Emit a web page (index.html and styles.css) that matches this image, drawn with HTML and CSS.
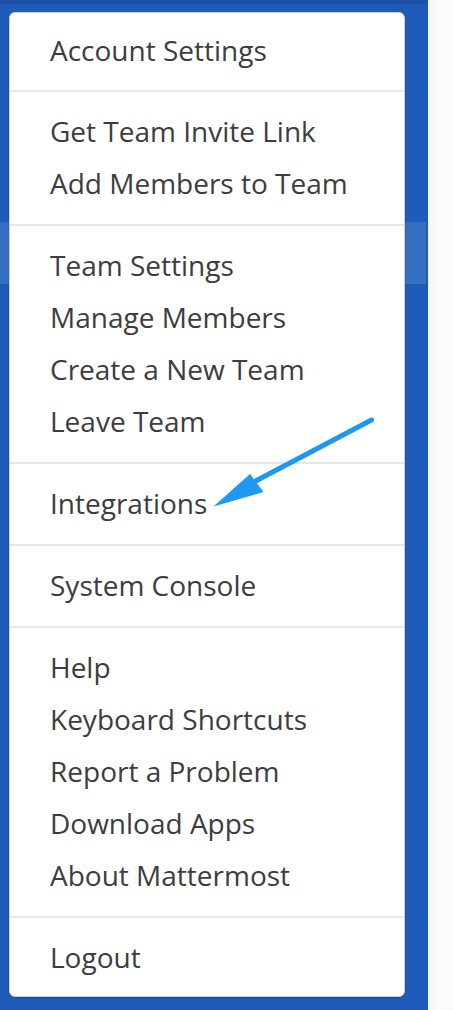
FILE: index.html
```html
<!DOCTYPE html>
<html>
<head>
<meta charset="utf-8">
<link rel="stylesheet" href="styles.css">
</head>
<body>
<div class="app">
  <aside class="sidebar">
    <div class="topbar"></div>
    <div class="spacer"></div>
    <div class="active-row"></div>
    <nav class="menu">
      <ul class="section first">
        <li>Account Settings</li>
      </ul>
      <ul class="section">
        <li>Get Team Invite Link</li>
        <li>Add Members to Team</li>
      </ul>
      <ul class="section">
        <li>Team Settings</li>
        <li>Manage Members</li>
        <li>Create a New Team</li>
        <li>Leave Team</li>
      </ul>
      <ul class="section">
        <li>Integrations</li>
      </ul>
      <ul class="section">
        <li>System Console</li>
      </ul>
      <ul class="section">
        <li>Help</li>
        <li>Keyboard Shortcuts</li>
        <li>Report a Problem</li>
        <li>Download Apps</li>
        <li>About Mattermost</li>
      </ul>
      <ul class="section last">
        <li>Logout</li>
      </ul>
    </nav>
  </aside>
  <main class="content"></main>
  <svg class="arrow" width="454" height="1010" viewBox="0 0 454 1010">
    <line x1="371.5" y1="420" x2="250" y2="484" stroke="#1e98f2" stroke-width="5" stroke-linecap="round"/>
    <polygon points="213.5,506.5 250,474 263.5,492" fill="#1e98f2"/>
  </svg>
</div>
</body>
</html>
```

FILE: styles.css
```css
html, body {
  margin: 0;
  padding: 0;
}
body {
  font-family: "Open Sans", "Liberation Sans", sans-serif;
  background: #fcfcfc;
}
.app {
  position: relative;
  display: flex;
  width: 454px;
  height: 1010px;
  overflow: hidden;
}
.sidebar {
  position: relative;
  width: 428px;
  flex: 0 0 428px;
  background: #1f5cb9;
  display: flex;
  flex-direction: column;
}
.topbar {
  height: 4px;
  background: #1b51a6;
}
.spacer {
  height: 218px;
}
.active-row {
  height: 62px;
  width: 426px;
  background: #3470bf;
}
.content {
  flex: 1;
  background: #fbfbfb;
  box-shadow: inset 6px 0 8px -6px rgba(0,0,0,0.08);
}
.menu {
  position: absolute;
  top: 12px;
  left: 9px;
  width: 394px;
  background: #fff;
  border: 1px solid #cfcfcf;
  border-radius: 6px;
  box-shadow: 0 1px 2px rgba(0,0,0,0.25);
}
.section {
  list-style: none;
  margin: 0;
  padding: 13px 0 15px;
  border-top: 2px solid #e6e6e6;
}
.section.first {
  border-top: none;
  padding-top: 11px;
  padding-bottom: 14px;
}
.section.last {
  padding-bottom: 13px;
}
.section li {
  height: 52px;
  line-height: 52px;
  padding-left: 40px;
  font-size: 28px;
  color: #3d3c40;
  white-space: nowrap;
}
.arrow {
  position: absolute;
  left: 0;
  top: 0;
  pointer-events: none;
}
```
